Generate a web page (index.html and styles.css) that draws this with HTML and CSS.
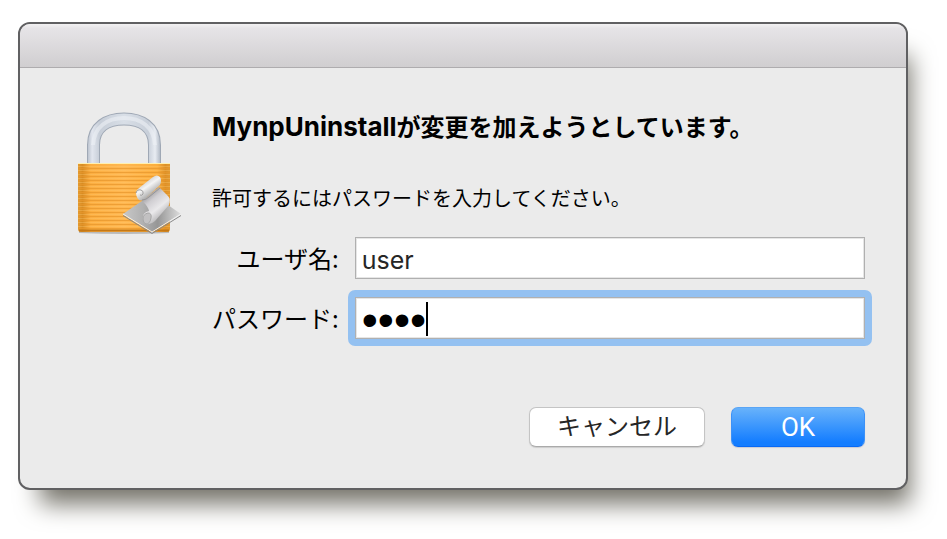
FILE: index.html
```html
<!DOCTYPE html>
<html lang="ja">
<head>
<meta charset="utf-8">
<meta name="viewport" content="width=device-width, initial-scale=1">
<title>MynpUninstall</title>
<link rel="stylesheet" href="styles.css">
</head>
<body>
<main class="dialog" role="dialog" aria-labelledby="title">
  <div class="titlebar"></div>
  <form class="content">
    <svg class="lock" viewBox="0 0 112 128" aria-hidden="true">
      <defs>
        <linearGradient id="steel" x1="11" x2="85" y1="0" y2="0" gradientUnits="userSpaceOnUse">
          <stop offset="0" stop-color="#b4bcc8"/><stop offset=".07" stop-color="#e2e6ee"/><stop offset=".17" stop-color="#c6cdd7"/>
          <stop offset=".5" stop-color="#d9dfe7"/><stop offset=".83" stop-color="#c8cfd9"/><stop offset=".92" stop-color="#e8ecf2"/><stop offset="1" stop-color="#a9b2bf"/>
        </linearGradient>
        <linearGradient id="brass" x1="0" x2="1" y1="0" y2="0">
          <stop offset="0" stop-color="#e29a30"/><stop offset=".05" stop-color="#d98c22"/><stop offset=".14" stop-color="#fcae40"/>
          <stop offset=".5" stop-color="#ffb750"/><stop offset=".86" stop-color="#fcae3c"/><stop offset=".95" stop-color="#dd9026"/><stop offset="1" stop-color="#e29a30"/>
        </linearGradient>
        <pattern id="brush" width="92" height="4" patternUnits="userSpaceOnUse" y="54">
          <path d="M0 .5h92" stroke="#e8962c" stroke-opacity=".7"/>
          <path d="M0 2.500h92" stroke="#ffd07c" stroke-opacity=".3"/>
        </pattern>
        <linearGradient id="sheet" x1="47" x2="105" y1="0" y2="0" gradientUnits="userSpaceOnUse">
          <stop offset="0" stop-color="#c8c8c8"/><stop offset=".35" stop-color="#b0b0b0"/><stop offset=".6" stop-color="#969696"/><stop offset="1" stop-color="#dedede"/>
        </linearGradient>
        <linearGradient id="scroll" x1="70" x2="88" y1="84" y2="106" gradientUnits="userSpaceOnUse">
          <stop offset="0" stop-color="#98979a"/><stop offset=".3" stop-color="#d0ced2"/><stop offset=".65" stop-color="#eae9eb"/><stop offset="1" stop-color="#b5b4b6"/>
        </linearGradient>
        <linearGradient id="roll" x1="68" x2="77" y1="71" y2="84" gradientUnits="userSpaceOnUse">
          <stop offset="0" stop-color="#cfcfcf"/><stop offset=".4" stop-color="#f4f4f4"/><stop offset="1" stop-color="#aaa"/>
        </linearGradient>
      </defs>
      <path d="M3 121h90v2q-45 2-90 0z" fill="#999" opacity=".6"/>
      <path d="M17.500 54V35C17.500 17 31 9 48 9s30.500 8 30.500 26v19" fill="none" stroke="#9fa8b5" stroke-width="13"/>
      <path d="M17.500 54V35C17.500 17 31 9 48 9s30.500 8 30.500 26v19" fill="none" stroke="url(#steel)" stroke-width="11"/>
      <path d="M17 35C18 17 31 8 48 8s30 9 31 27" fill="none" stroke="#edf0f5" stroke-width="4" opacity=".6"/>
      <path d="M2 53h92v66q0 3-3 3H5q-3 0-3-3z" fill="url(#brass)"/>
      <path d="M2 55h92v64H2z" fill="url(#brush)"/>
      <path d="M2 53.500h92" stroke="#fff0b0"/>
      <path d="M3 120.500h90" stroke="#c47817" stroke-width="2"/>
      <path d="M47 104l29-20 29 20-29 18z" fill="url(#sheet)"/>
      <path d="M47 104l29 18 29-18" fill="none" stroke="#f0f0f0"/>
      <path d="M47 105.500l29 18 29-18" fill="none" stroke="#888"/>
      <path d="M66 91l17-14 9 9q3 3 1 9L79 111q-4 4-9 3-4-2-3-8 1-4 6-5-1-5-7-10z" fill="url(#scroll)"/>
      <path d="M60 83q0-3 3-5l14-11q4-3 7 0 2 3 0 8L69 89q-4 3-7 0-2-3-2-6z" fill="url(#roll)"/>
      <path d="M60 83q1-4 5-3 3 1 2 4-1 2-3 1" fill="none" stroke="#a09fa0"/>
      <path d="M66 90q4 0 7-3l11-9" fill="none" stroke="#969596"/>
      <path d="M67 109q0-5 5-6 4 0 3 5-1 6-5 6-3-1-3-5z" fill="#c2c1c2" stroke="#a6a6a6"/>
    </svg>
    <div class="details">
      <h1 id="title">MynpUninstall<span class="ja">が変更を加えようとしています。</span></h1>
      <p>許可するにはパスワードを入力してください。</p>
      <div class="fields">
        <label for="username">ユーザ名:</label>
        <input id="username" type="text" value="user" autocomplete="off">
        <label for="password">パスワード:</label>
        <div class="secret">
          <input id="password" type="password" value="user" autocomplete="off">
          <span class="caret"></span>
        </div>
      </div>
      <div class="actions">
        <button class="cancel" type="button">キャンセル</button>
        <button class="ok" type="button">OK</button>
      </div>
    </div>
  </form>
</main>
</body>
</html>
```

FILE: styles.css
```css
* {
  box-sizing: border-box;
}

body {
  margin: 0;
  padding: 22px 39px 49px 18px;
  background: #fff;
  color: #000;
  font-family: Inter, "Noto Sans CJK JP", sans-serif;
}

.dialog {
  overflow: hidden;
  border: 2px solid #606062;
  border-radius: 12px;
  background: #ebebeb;
  box-shadow: 12px 24px 24px -10px #75736a;
}

.titlebar {
  height: 44px;
  border-bottom: 1px solid #aeacae;
  background: linear-gradient(#f2f1f2, #e6e4e7 10%, #d0ced0);
}

.content {
  display: flex;
  gap: 24px;
  padding: 42px 41px 41px 56px;
}

.lock {
  flex: none;
  width: 112px;
  height: 128px;
}

.details {
  flex: 1;
  min-width: 0;
}

h1 {
  margin: 0;
  font-size: 26px;
  line-height: 34px;
  font-weight: 700;
  white-space: nowrap;
}

.ja {
  font-size: 24px;
  line-height: 24px;
}

p {
  margin: 40px 0 23px;
  font-size: 20px;
  line-height: 30px;
}

.fields {
  display: grid;
  grid-template-columns: auto 1fr;
  gap: 18px 16px;
  align-items: center;
}

label {
  font-family: "Noto Sans CJK JP", sans-serif;
  font-size: 24px;
  line-height: 40px;
  text-align: right;
}

input {
  display: block;
  width: 100%;
  height: 42px;
  padding: 4px 6px 0;
  border: 1px solid #b0b0b0;
  border-radius: 0;
  outline: 0;
  background: #fff;
  box-shadow: inset 0 0 0 1px #e6e6e6;
  color: #262626;
  font-family: Inter, sans-serif;
  font-size: 25px;
}

.secret {
  position: relative;
  margin: -7px;
  padding: 7px;
  border-radius: 7px;
  background: #94c1f1;
}

.secret input {
  color: #000;
  font-family: "Liberation Sans", sans-serif;
  font-size: 46px;
}

.caret {
  position: absolute;
  top: 12px;
  left: 78px;
  width: 2px;
  height: 34px;
  background: #000;
}

.actions {
  display: flex;
  justify-content: flex-end;
  gap: 26px;
  margin-top: 68px;
}

button {
  height: 40px;
  padding: 0;
  border: 1px solid #c4c4c4;
  border-radius: 7px;
  font-family: Roboto, "Noto Sans CJK JP", sans-serif;
  line-height: 36px;
}

.cancel {
  width: 176px;
  border-bottom-color: #aaa;
  background: #fff;
  box-shadow: 0 1px 1px #ccc;
  color: #262626;
  font-size: 24px;
}

.ok {
  width: 134px;
  border-color: #5aa5f5 #3c91f7 #0869f5;
  background: linear-gradient(#68b2fb, #137dff 90%);
  box-shadow: 0 1px 1px #c8ccd4;
  color: #fff;
  font-size: 26px;
}
```
